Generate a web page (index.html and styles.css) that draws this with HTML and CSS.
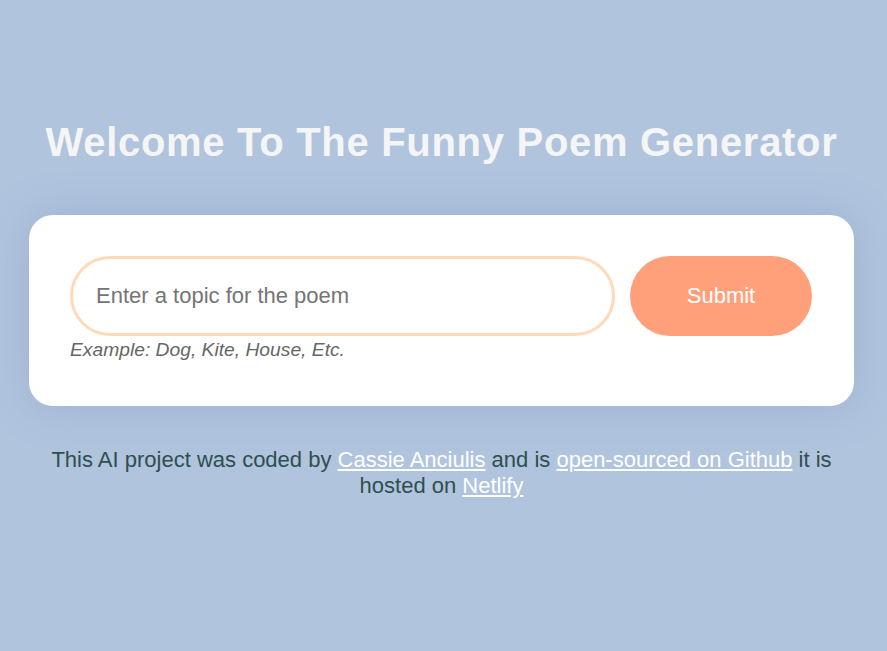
FILE: index.html
```html
<!DOCTYPE html>
<html lang="en">
<head>
<meta charset="utf-8">
<title>Funny Poem Generator</title>
<link rel="stylesheet" href="styles.css">
</head>
<body>
<div class="container">
  <h1 class="title">Welcome To The Funny Poem Generator</h1>
  <form class="card">
    <div class="row">
      <input class="topic" type="text" placeholder="Enter a topic for the poem">
      <button class="submit" type="button">Submit</button>
    </div>
    <div class="hint">Example: Dog, Kite, House, Etc.</div>
  </form>
  <footer class="footer">
    This AI project was coded by <a href="#">Cassie Anciulis</a> and is <a href="#">open-sourced on Github</a> it is hosted on <a href="#">Netlify</a>
  </footer>
</div>
</body>
</html>
```

FILE: styles.css
```css
html, body {
  margin: 0;
  padding: 0;
  background: #b0c4de;
  font-family: "Liberation Sans", Arial, sans-serif;
}
.container {
  padding: 119px 33px 0 29px;
}
.title {
  margin: 0 0 50px;
  text-align: center;
  color: #f5f5f5;
  font-size: 40px;
  letter-spacing: 0.7px;
  font-weight: bold;
  line-height: 46px;
}
.card {
  background: #fff;
  border-radius: 24px;
  padding: 41px 42px 45px 41px;
  box-shadow: 0 0 40px rgba(120, 140, 180, 0.35);
}
.row {
  display: flex;
  gap: 15px;
  align-items: center;
}
.topic {
  flex: 1;
  box-sizing: border-box;
  height: 80px;
  border: 3px solid #ffdab9;
  border-radius: 40px;
  padding: 0 23px;
  font-family: inherit;
  font-size: 22px;
  color: #333;
  outline: none;
  margin: 0;
}
.topic::placeholder {
  color: #757575;
}
.submit {
  width: 182px;
  height: 80px;
  border: none;
  border-radius: 40px;
  background: #ffa07a;
  color: #fff;
  font-family: inherit;
  font-size: 22px;
  margin: 0;
}
.hint {
  margin-top: 3px;
  font-size: 19.25px;
  font-style: italic;
  color: #666;
  line-height: 22px;
}
.footer {
  margin: 41px 10px 0;
  text-align: center;
  font-size: 22px;
  line-height: normal;
  color: #2f4f4f;
}
.footer a {
  color: #fff;
}
```
